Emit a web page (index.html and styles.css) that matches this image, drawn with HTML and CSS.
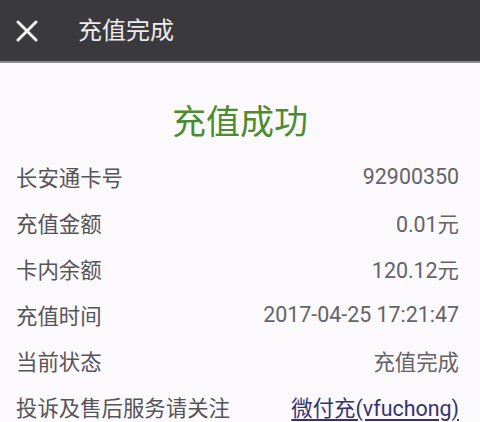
FILE: index.html
```html
<!DOCTYPE html>
<html lang="zh">
<head>
<meta charset="utf-8">
<link rel="stylesheet" href="styles.css">
</head>
<body>
<header class="topbar">
  <svg class="close" width="22" height="22" viewBox="0 0 22 22"><path d="M2 2 L20 20 M20 2 L2 20" stroke="#f2f2f2" stroke-width="3" stroke-linecap="round" fill="none"/></svg>
  <span class="title">充值完成</span>
</header>
<main class="content">
  <h1 class="result">充值成功</h1>
  <div class="row"><span class="label">长安通卡号</span><span class="value">92900350</span></div>
  <div class="row"><span class="label">充值金额</span><span class="value">0.01元</span></div>
  <div class="row"><span class="label">卡内余额</span><span class="value">120.12元</span></div>
  <div class="row"><span class="label">充值时间</span><span class="value">2017-04-25 17:21:47</span></div>
  <div class="row"><span class="label">当前状态</span><span class="value">充值完成</span></div>
  <div class="row"><span class="label">投诉及售后服务请关注</span><a class="value link" href="#">微付充(vfuchong)</a></div>
</main>
</body>
</html>
```
FILE: styles.css
```css
html, body {
  margin: 0;
  padding: 0;
  background: #fbf9fc;
  font-family: Roboto, "Noto Sans CJK SC", sans-serif;
}
.topbar {
  height: 61px;
  background: #3a393e;
  border-bottom: 2px solid #8c8b92;
  display: flex;
  align-items: center;
  padding-left: 16px;
  box-sizing: content-box;
}
.close {
  display: block;
}
.title {
  margin-left: 40px;
  color: #ececec;
  font-size: 24px;
  line-height: 1;
}
.content {
  display: flex;
  flex-direction: column;
}
.result {
  margin: 0;
  height: 90px;
  padding-top: 36px;
  box-sizing: border-box;
  text-align: center;
  font-weight: normal;
  font-size: 34px;
  line-height: 46px;
  color: #4b8c2e;
}
.row {
  height: 46px;
  display: flex;
  align-items: center;
  justify-content: space-between;
  padding: 0 21px 0 16px;
  font-size: 21.4px;
}
.label {
  color: #555457;
}
.value {
  color: #646366;
}
.link {
  color: #34336e;
  text-decoration: underline;
  text-underline-offset: 3px;
}
```
